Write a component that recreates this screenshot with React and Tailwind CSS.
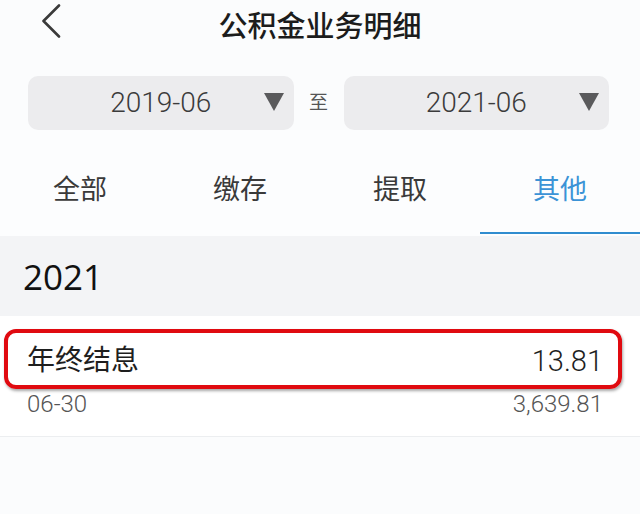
export default function App() {
  const tabs = ['全部', '缴存', '提取', '其他'];
  const active = 3;
  const num = { fontFamily: '"Roboto", "Liberation Sans", sans-serif' };

  return (
    <div
      className="w-[640px] h-[514px] overflow-hidden bg-[#fbfcfd] text-[#222]"
      style={{ fontFamily: '"Liberation Sans", "Noto Sans CJK SC", sans-serif' }}
    >
      {/* header */}
      <div className="relative h-[52px] flex items-center justify-center">
        <svg className="absolute left-[40px] top-[4px]" width="22" height="34" viewBox="0 0 22 34">
          <path d="M19 1.5 L3.5 17 L19 32.5" fill="none" stroke="#3a3a3a" strokeWidth="2.6" strokeLinecap="round" strokeLinejoin="round" />
        </svg>
        <h1 className="text-[29px] leading-none font-medium text-[#1c1c1c] mt-[2px]">公积金业务明细</h1>
      </div>

      {/* date range */}
      <div className="flex items-center pl-[28px] pr-[31px] pt-[24px]">
        <div className="relative flex-1 h-[54px] rounded-[10px] bg-[#ececee] flex items-center justify-center">
          <span className="text-[28px] leading-none font-light text-[#3b3b3b]" style={num}>2019-06</span>
          <svg className="absolute right-[10px] top-[17px]" width="20" height="18" viewBox="0 0 20 18">
            <path d="M0 0 H20 L10 18 Z" fill="#5a5a5c" />
          </svg>
        </div>
        <div className="w-[50px] flex justify-center text-[19px] text-[#555]">至</div>
        <div className="relative flex-1 h-[54px] rounded-[10px] bg-[#ececee] flex items-center justify-center">
          <span className="text-[28px] leading-none font-light text-[#3b3b3b]" style={num}>2021-06</span>
          <svg className="absolute right-[10px] top-[17px]" width="20" height="18" viewBox="0 0 20 18">
            <path d="M0 0 H20 L10 18 Z" fill="#5a5a5c" />
          </svg>
        </div>
      </div>

      {/* tabs */}
      <div className="grid grid-cols-4 h-[106px] bg-[#fcfdfe]">
        {tabs.map((t, i) => (
          <div key={t} className="flex flex-col items-center pt-[47px]">
            <span className={`text-[27px] leading-none ${i === active ? 'text-[#3b93d6]' : 'text-[#3a3a3a]'}`}>{t}</span>
            <div className="flex-1" />
            <div className={`w-full h-[2px] ${i === active ? 'bg-[#2f8ccf]' : ''}`} />
            <div className="h-[2px]" />
          </div>
        ))}
      </div>

      {/* year */}
      <div className="h-[80px] bg-[#f3f4f6] flex items-center pl-[23px]">
        <span className="text-[35px] leading-none text-[#111]" style={{ fontFamily: '"Open Sans", sans-serif' }}>2021</span>
      </div>

      {/* record */}
      <div className="relative h-[121px] bg-white border-b border-[#eceef0] px-[27px] pt-[30px]">
        <div className="flex items-center justify-between h-[30px]">
          <span className="text-[28px] leading-none text-[#1e1e1e]">年终结息</span>
          <span className="text-[29px] leading-none font-light text-[#1e1e1e] mr-[10px]" style={num}>13.81</span>
        </div>
        <div className="flex items-center justify-between mt-[16px]">
          <span className="text-[24px] leading-none font-light text-[#555]" style={num}>06-30</span>
          <span className="text-[24px] leading-none font-light text-[#555] mr-[10px]" style={num}>3,639.81</span>
        </div>
        <div className="absolute left-[4px] top-[13px] w-[618px] h-[60px] rounded-[12px] border-[4px] border-[#e00a10] shadow-[1px_2px_3px_rgba(0,0,0,0.35)]" />
      </div>

      <div className="flex-1 bg-[#f9fbfc]" />
    </div>
  );
}
